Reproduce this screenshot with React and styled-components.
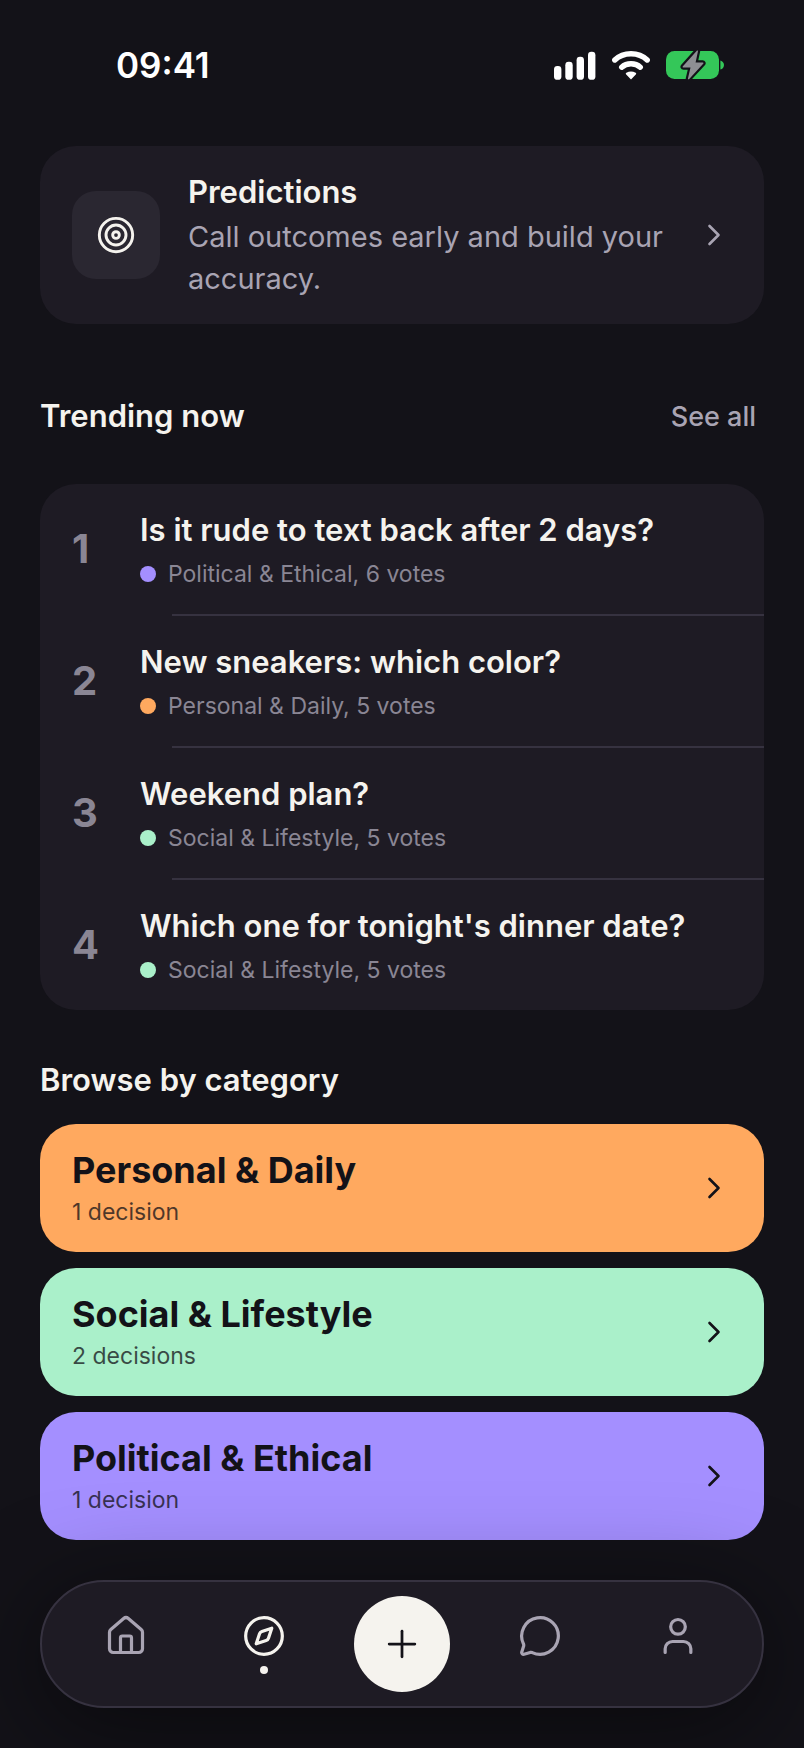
import React from 'react';
import styled, { createGlobalStyle } from 'styled-components';
import { ChevronRight, Compass, House, MessageCircle, Plus, Target, User } from 'lucide-react';

const colors = {
  bg: '#131218',
  card: '#1e1b24',
  tile: '#2a2731',
  line: '#363240',
  text: '#f5f3ee',
  muted: '#a9a4b3',
  dim: '#8a8694',
  orange: '#ffa95f',
  green: '#aaf0ca',
  purple: '#a48fff',
};

const trending = [
  { title: 'Is it rude to text back after 2 days?', meta: 'Political & Ethical, 6 votes', color: colors.purple },
  { title: 'New sneakers: which color?', meta: 'Personal & Daily, 5 votes', color: colors.orange },
  { title: 'Weekend plan?', meta: 'Social & Lifestyle, 5 votes', color: colors.green },
  { title: "Which one for tonight's dinner date?", meta: 'Social & Lifestyle, 5 votes', color: colors.green },
];

const categories = [
  { name: 'Personal & Daily', count: '1 decision', color: colors.orange },
  { name: 'Social & Lifestyle', count: '2 decisions', color: colors.green },
  { name: 'Political & Ethical', count: '1 decision', color: colors.purple },
];

const SignalIcon = () => (
  <svg width="42" height="30" viewBox="0 0 42 30" fill="#fff" aria-hidden="true">
    <rect x="0" y="16" width="7.4" height="13.8" rx="3.4" />
    <rect x="11.3" y="11.8" width="7.4" height="18" rx="3.4" />
    <rect x="22.6" y="6.8" width="7.4" height="23" rx="3.4" />
    <rect x="34" y="1.8" width="7.4" height="28" rx="3.4" />
  </svg>
);

const WifiIcon = () => (
  <svg width="38" height="30" viewBox="0 0 38 30" fill="none" stroke="#fff" strokeWidth="5.4" strokeLinecap="round" aria-hidden="true">
    <path d="M2.8 10C11.4 1.6 26.6 1.6 35.2 10" />
    <path d="M9.7 17.2C14.6 12.6 23.4 12.6 28.3 17.2" />
    <path d="M19 29.4l-4.8-4.8c-.6-.6-.5-1.4.2-1.8 2.8-1.8 6.4-1.8 9.2 0 .7.4.8 1.2.2 1.8z" fill="#fff" stroke="none" />
  </svg>
);

const BatteryIcon = () => (
  <svg width="58" height="30" viewBox="0 0 58 30" aria-hidden="true">
    <rect x="0" y="1" width="53" height="28" rx="8.5" fill="#34c759" />
    <path d="M54.4 10.4c2.2.6 3.6 2.4 3.6 4.6s-1.4 4-3.6 4.6z" fill="#34c759" />
    <path
      d="M30.6.9 16.9 16.2c-.6.7-.2 1.4.6 1.4h7L22 28.2c-.3 1.2.5 1.4 1.2.7L37.2 13.8c.6-.7.2-1.4-.6-1.4h-7L31.9 1.6c.3-1.2-.6-1.4-1.3-.7z"
      fill="#8e8e93"
      stroke={colors.bg}
      strokeWidth="4.4"
      strokeLinejoin="round"
      paintOrder="stroke"
    />
  </svg>
);

const App = () => {
  return (
    <>
      <GlobalStyle />
      <Screen>
        <StatusBar>
          <Time>09:41</Time>
          <StatusIcons>
            <SignalIcon />
            <WifiIcon />
            <BatteryIcon />
          </StatusIcons>
        </StatusBar>

        <Content>
          <PredictionCard href="#predictions">
            <IconTile>
              <Target size={40} strokeWidth={1.75} />
            </IconTile>
            <PredictionText>
              <ItemTitle>Predictions</ItemTitle>
              <PredictionCopy>Call outcomes early and build your accuracy.</PredictionCopy>
            </PredictionText>
            <ChevronRight size={36} strokeWidth={1.75} />
          </PredictionCard>

          <SectionHeader>
            <SectionTitle>Trending now</SectionTitle>
            <SeeAll type="button">See all</SeeAll>
          </SectionHeader>

          <TrendingList>
            {trending.map((item, index) => (
              <TrendingItem key={item.title}>
                <TrendingLink href="#decision">
                  <Rank>{index + 1}</Rank>
                  <TrendingText>
                    <ItemTitle>{item.title}</ItemTitle>
                    <Meta>
                      <Dot $color={item.color} />
                      {item.meta}
                    </Meta>
                  </TrendingText>
                </TrendingLink>
              </TrendingItem>
            ))}
          </TrendingList>

          <BrowseTitle>Browse by category</BrowseTitle>
          <CategoryList>
            {categories.map((category) => (
              <CategoryCard key={category.name} href="#category" $color={category.color}>
                <CategoryText>
                  <CategoryName>{category.name}</CategoryName>
                  <CategoryCount>{category.count}</CategoryCount>
                </CategoryText>
                <ChevronRight size={36} strokeWidth={1.75} />
              </CategoryCard>
            ))}
          </CategoryList>

          <NavBar aria-label="Main">
            <NavButton type="button" aria-label="Home">
              <House size={44} strokeWidth={1.75} />
              <NavDot />
            </NavButton>
            <NavButton type="button" aria-label="Explore" $active>
              <Compass size={44} strokeWidth={1.75} />
              <NavDot $active />
            </NavButton>
            <AddButton type="button" aria-label="Add">
              <Plus size={44} strokeWidth={1.5} />
            </AddButton>
            <NavButton type="button" aria-label="Messages">
              <MessageCircle size={44} strokeWidth={1.75} />
              <NavDot />
            </NavButton>
            <NavButton type="button" aria-label="Profile">
              <User size={44} strokeWidth={1.75} />
              <NavDot />
            </NavButton>
          </NavBar>
        </Content>
      </Screen>
    </>
  );
};

const GlobalStyle = createGlobalStyle`
  * {
    box-sizing: border-box;
  }

  body {
    margin: 0;
    background: ${colors.bg};
    color: ${colors.text};
    font-family: Inter, sans-serif;
  }

  h2, h3, p, ol {
    margin: 0;
    padding: 0;
  }

  a {
    color: inherit;
    text-decoration: none;
  }

  button {
    border: 0;
    padding: 0;
    background: none;
    font-family: inherit;
    cursor: pointer;
  }

  svg {
    display: block;
    flex-shrink: 0;
  }
`;

const Screen = styled.div`
  min-height: 100vh;
  overflow: hidden;
`;

const StatusBar = styled.header`
  display: flex;
  align-items: center;
  justify-content: space-between;
  height: 130px;
  margin-bottom: 16px;
  padding: 0 80px 0 116px;
`;

const Time = styled.span`
  color: #fff;
  font-size: 35px;
  font-weight: 600;
  line-height: 44px;
`;

const StatusIcons = styled.div`
  display: flex;
  align-items: center;
  gap: 16px;
`;

const Content = styled.main`
  padding: 0 40px 40px;
`;

const PredictionCard = styled.a`
  display: flex;
  align-items: center;
  padding: 24px 32px;
  border-radius: 36px;
  background: ${colors.card};

  > svg {
    color: ${colors.muted};
  }
`;

const IconTile = styled.span`
  display: flex;
  align-items: center;
  justify-content: center;
  flex-shrink: 0;
  width: 88px;
  height: 88px;
  margin-right: 28px;
  border-radius: 24px;
  background: ${colors.tile};
`;

const PredictionText = styled.div`
  display: flex;
  flex: 1;
  flex-direction: column;
  gap: 2px;
  padding-right: 28px;
`;

const ItemTitle = styled.h3`
  font-size: 31px;
  font-weight: 600;
  line-height: 44px;
`;

const PredictionCopy = styled.p`
  color: ${colors.muted};
  font-size: 29px;
  line-height: 42px;
`;

const SectionHeader = styled.div`
  display: flex;
  align-items: center;
  justify-content: space-between;
  height: 88px;
  margin: 48px 0 24px;
`;

const SectionTitle = styled.h2`
  font-size: 31px;
  font-weight: 600;
  line-height: 44px;
`;

const BrowseTitle = styled(SectionTitle)`
  margin: 48px 0 22px;
`;

const SeeAll = styled.button`
  height: 88px;
  padding: 0 8px;
  color: ${colors.muted};
  font-size: 27px;
  font-weight: 500;
`;

const TrendingList = styled.ol`
  overflow: hidden;
  border-radius: 36px;
  background: ${colors.card};
  list-style: none;
`;

const TrendingItem = styled.li`
  & + &::before {
    content: '';
    display: block;
    height: 2px;
    margin-left: 132px;
    background: ${colors.line};
  }
`;

const TrendingLink = styled.a`
  display: flex;
  align-items: center;
  padding: 24px 32px;
`;

const Rank = styled.span`
  flex-shrink: 0;
  width: 68px;
  color: ${colors.dim};
  font-size: 40px;
  font-weight: 700;
  line-height: 44px;
`;

const TrendingText = styled.div`
  display: flex;
  flex-direction: column;
  gap: 6px;
`;

const Meta = styled.p`
  display: flex;
  align-items: center;
  gap: 12px;
  color: ${colors.dim};
  font-size: 23px;
  line-height: 32px;
`;

const Dot = styled.span`
  width: 16px;
  height: 16px;
  border-radius: 50%;
  background: ${(props) => props.$color};
`;

const CategoryList = styled.div`
  display: flex;
  flex-direction: column;
  gap: 16px;
`;

const CategoryCard = styled.a`
  display: flex;
  align-items: center;
  justify-content: space-between;
  padding: 24px 32px;
  border-radius: 36px;
  background: ${(props) => props.$color};
  color: ${colors.bg};
`;

const CategoryText = styled.div`
  display: flex;
  flex-direction: column;
  gap: 4px;
`;

const CategoryName = styled.h3`
  font-size: 36px;
  font-weight: 700;
  line-height: 44px;
`;

const CategoryCount = styled.p`
  font-size: 23px;
  line-height: 32px;
  opacity: 0.75;
`;

const NavBar = styled.nav`
  position: relative;
  display: grid;
  grid-template-columns: repeat(5, 1fr);
  align-items: center;
  justify-items: center;
  height: 128px;
  margin-top: 40px;
  padding: 0 15px;
  border: 2px solid ${colors.line};
  border-radius: 64px;
  background: ${colors.card};
  box-shadow: 0 16px 96px rgba(0, 0, 0, 0.5);
`;

const NavButton = styled.button`
  display: flex;
  flex-direction: column;
  align-items: center;
  gap: 8px;
  color: ${(props) => (props.$active ? colors.text : colors.muted)};
`;

const NavDot = styled.span`
  width: 8px;
  height: 8px;
  border-radius: 50%;
  background: ${(props) => (props.$active ? colors.text : 'transparent')};
`;

const AddButton = styled.button`
  display: flex;
  align-items: center;
  justify-content: center;
  width: 96px;
  height: 96px;
  border-radius: 50%;
  background: ${colors.text};
  color: ${colors.bg};
`;

export default App;
